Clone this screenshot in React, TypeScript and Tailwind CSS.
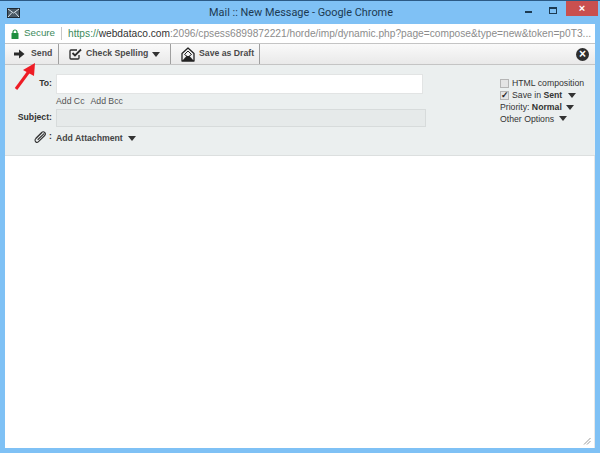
const font = { fontFamily: '"Liberation Sans", Arial, sans-serif' };

function Caret({ className = '' }: { className?: string }) {
  return <span className={`inline-block shrink-0 w-0 h-0 border-l-[4px] border-r-[4px] border-t-[5px] border-l-transparent border-r-transparent border-t-[#333] ${className}`} />;
}

function MailIcon() {
  return (
    <svg width="13" height="10" viewBox="0 0 13 10" className="shrink-0">
      <rect x="0.5" y="0.5" width="12" height="9" fill="#4a5a66" stroke="#1f2a33" />
      <path d="M1 1l5.5 4L12 1M1 9l4-4.5M12 9L8 4.5" stroke="#d8e4ec" strokeWidth="1" fill="none" />
    </svg>
  );
}

function Lock() {
  return (
    <svg width="8" height="10" viewBox="0 0 8 10" className="shrink-0">
      <path d="M2 4.5V3a2 2 0 014 0v1.5" stroke="#1e8e3e" strokeWidth="1.2" fill="none" />
      <rect x="0.5" y="4" width="7" height="6" rx="0.5" fill="#1e8e3e" />
    </svg>
  );
}

function SendArrow() {
  return (
    <svg width="11" height="10" viewBox="0 0 11 10" className="shrink-0">
      <path d="M0 3.5h5V0.5L10.5 5 5 9.5V6.5H0z" fill="#2b2b2b" />
    </svg>
  );
}

function CheckBoxIcon() {
  return (
    <svg width="13" height="12" viewBox="0 0 13 12" className="shrink-0">
      <path d="M10 7v3a1 1 0 01-1 1H2a1 1 0 01-1-1V3a1 1 0 011-1h6" stroke="#2b2b2b" strokeWidth="1.3" fill="none" />
      <path d="M3.5 5l2.5 2.5L12 1.5" stroke="#2b2b2b" strokeWidth="1.8" fill="none" />
    </svg>
  );
}

function DraftIcon() {
  return (
    <svg width="14" height="15" viewBox="0 0 14 15" className="shrink-0">
      <path d="M1 6.5L7 1l6 5.5V14H1z" stroke="#222" strokeWidth="1.3" fill="none" strokeLinejoin="round" />
      <path d="M3.5 7.5L7 4l3.5 3.5L7 10z" stroke="#222" strokeWidth="1" fill="none" />
      <path d="M1 14l4.5-5h3L13 14z" fill="#222" />
    </svg>
  );
}

function Paperclip() {
  return (
    <svg width="14" height="14" viewBox="0 0 14 14" className="shrink-0">
      <path d="M9 2.5L2.6 8.9a2 2 0 002.9 2.8l6.2-6.2a1.2 1.2 0 00-3-3L2.9 8.2M10.8 3.8L5 9.5" stroke="#333" strokeWidth="1.1" fill="none" strokeLinecap="round" />
    </svg>
  );
}

export default function App() {
  return (
    <div className="w-[600px] h-[453px] overflow-hidden relative bg-[#7fc1f5] border-t border-[#2c5a85] flex flex-col" style={font}>
      {/* title bar */}
      <div className="h-[23px] shrink-0 flex items-center pl-[7px] relative">
        <MailIcon />
        <div className="absolute left-[2px] right-0 top-[3px] text-center text-[10.9px] leading-[17px] text-[#1c3a52]" style={{ fontFamily: 'Roboto, sans-serif' }}>
          Mail :: New Message - Google Chrome
        </div>
        <div className="ml-auto flex items-start h-full mr-[2px]">
          <div className="w-[24px] flex justify-center pt-[10px]">
            <div className="w-[7px] h-[2px] bg-[#1c3a52]" />
          </div>
          <div className="w-[26px] flex justify-center pt-[6px]">
            <div className="w-[8px] h-[7px] border border-t-2 border-[#1c3a52]" />
          </div>
          <div className="w-[32px] h-[15px] bg-[#c9504f] text-white text-[11px] leading-[14px] text-center font-bold">×</div>
        </div>
      </div>

      {/* content */}
      <div className="flex-1 mx-[5px] mb-[5px] flex flex-col bg-white min-h-0">
        {/* address bar */}
        <div className="h-[19px] shrink-0 flex items-center pl-[6px] pr-[2px] text-[10.2px] whitespace-nowrap">
          <Lock />
          <span className="ml-[5px] text-[9.8px] text-[#3d8a5c]">Secure</span>
          <span className="ml-[6px] mr-[6px] w-px h-[13px] bg-[#c8c8c8]" />
          <span className="text-[#3d8a5c]">https://</span>
          <span className="text-[#333]">webdataco.com</span>
          <span className="text-[#8c8c8c]">:2096/cpsess6899872221/horde/imp/dynamic.php?page=compose&amp;type=new&amp;token=p0T3...</span>
        </div>

        {/* toolbar */}
        <div className="h-[22px] shrink-0 flex items-stretch bg-gradient-to-b from-[#fafafa] to-[#e9e9e9] border-y border-[#c4c4c4] text-[8.7px] font-bold text-[#4a4a4a] whitespace-nowrap">
          <div className="w-[54px] flex items-center pl-[9px] gap-[6px] border-r border-[#9f9f9f]">
            <SendArrow />
            <span>Send</span>
          </div>
          <div className="w-[112px] flex items-center pl-[10px] gap-[4px] border-r border-[#9f9f9f]">
            <CheckBoxIcon />
            <span>Check Spelling</span>
            <Caret />
          </div>
          <div className="w-[89px] flex items-center pl-[10px] gap-[4px] border-r border-[#9f9f9f]">
            <DraftIcon />
            <span>Save as Draft</span>
          </div>
          <div className="ml-auto mr-[6px] self-center w-[13px] h-[13px] rounded-full bg-[#2e2e2e] text-white text-[12px] leading-[12px] text-center">×</div>
        </div>

        {/* compose fields */}
        <div className="h-[91px] shrink-0 bg-[#ebefef] border-b border-[#dcdfdf] flex text-[8.7px] text-[#444] pt-[9px]">
          <div className="w-[47px] flex flex-col items-end text-[#333] font-bold">
            <div className="h-[20px] flex items-center">To:</div>
            <div className="h-[15px]" />
            <div className="h-[18px] flex items-center">Subject:</div>
            <div className="mt-[3px] flex items-center gap-[2px] font-bold">
              <Paperclip />
              <span>:</span>
            </div>
          </div>
          <div className="ml-[4px] w-[370px] flex flex-col">
            <div className="h-[20px] w-[367px] bg-white border border-[#e2e4e4]" />
            <div className="h-[15px] flex items-center gap-[6px] text-[#555]">
              <span>Add Cc</span>
              <span>Add Bcc</span>
            </div>
            <div className="h-[18px] w-[370px] bg-[#e6eaea] border border-[#d7dbdb]" />
            <div className="mt-[5px] flex items-center gap-[5px] font-bold text-[#444]">
              <span>Add Attachment</span>
              <Caret />
            </div>
          </div>
          <div className="ml-[74px] flex flex-col text-[#333] leading-[12px] pt-[3px] whitespace-nowrap">
            <label className="flex items-center gap-[3px] h-[12px]">
              <span className="w-[9px] h-[9px] bg-[#e4e4e4] border border-[#b5b5b5]" />
              <span>HTML composition</span>
            </label>
            <label className="flex items-center gap-[3px] h-[12px]">
              <span className="w-[9px] h-[9px] bg-[#e4e4e4] border border-[#b5b5b5] text-[9px] leading-[7px] font-bold text-[#222]">✓</span>
              <span>Save in <b>Sent</b></span>
              <Caret className="ml-[3px]" />
            </label>
            <div className="flex items-center gap-[4px] h-[12px]">
              <span>Priority: <b>Normal</b></span>
              <Caret />
            </div>
            <div className="flex items-center gap-[5px] h-[11px]">
              <span>Other Options</span>
              <Caret />
            </div>
          </div>
        </div>

        {/* message body */}
        <div className="flex-1 bg-white relative border-r border-[#e8e8e8]">
          <div className="absolute right-[3px] bottom-[3px]">
            <svg width="8" height="8" viewBox="0 0 8 8">
              <path d="M7.5 1L1 7.5M7.5 4L4 7.5" stroke="#999" strokeWidth="1" />
            </svg>
          </div>
        </div>
      </div>

      {/* red arrow annotation */}
      <svg className="absolute left-[14px] top-[62px]" width="24" height="28" viewBox="0 0 24 28">
        <path d="M2 26L16 7" stroke="#ee1c25" strokeWidth="3" />
        <path d="M21 0L9 7l11 6z" fill="#ee1c25" />
      </svg>
    </div>
  );
}
